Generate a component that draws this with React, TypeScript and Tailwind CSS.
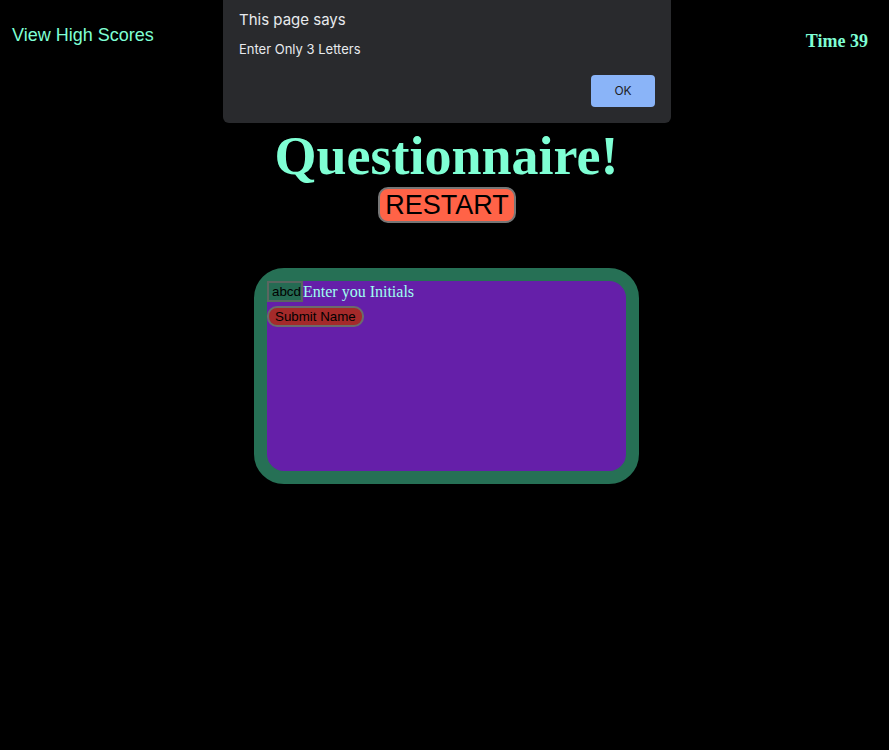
import React from "react";

export default function App() {
  return (
    <div className="relative min-h-[750px] w-full bg-black font-['Liberation_Serif',serif]">
      <div className="flex items-start justify-between px-3 pt-[24px]">
        <a className="font-['Liberation_Sans',Arial,sans-serif] text-[18px] leading-[22px] text-[#7fffd4]">
          View High Scores
        </a>
        <p className="mr-[9px] mt-[6px] text-[18px] font-bold leading-[22px] text-[#7fffd4]">Time 39</p>
      </div>

      <div className="flex flex-col items-center pt-[74px] pl-[4px]">
        <h1 className="text-[54px] font-bold leading-[60px] text-[#7fffd4]">Questionnaire!</h1>
        <button className="mt-[1px] ml-[1px] rounded-[10px] border-2 border-[#767676] bg-[#ff6347] px-[5px] py-[1px] font-['Liberation_Sans',Arial,sans-serif] text-[27px] leading-[30px] text-black">
          RESTART
        </button>
      </div>

      <div className="flex justify-center pl-[4px] pt-[45px]">
        <div className="h-[216px] w-[385px] rounded-[30px] border-[13px] border-[#267055] bg-[#651fa9]">
          <div className="flex items-center">
            <div className="h-[21px] w-[36px] overflow-hidden whitespace-nowrap border-2 border-[#5a6660] bg-[#256b53] pl-[3px] font-['Liberation_Sans',Arial,sans-serif] text-[13.33px] leading-[17px] text-black">
              abcd
            </div>
            <span className="text-[16px] leading-[20px] text-[#9ffff0]">Enter you Initials</span>
          </div>
          <button className="mt-[4px] rounded-[10px] border-2 border-[#6b6b6b] bg-[#a52a2a] px-[6px] font-['Liberation_Sans',Arial,sans-serif] text-[13.33px] leading-[17px] text-black">
            Submit Name
          </button>
        </div>
      </div>

      <div className="absolute left-[223px] top-0 h-[123px] w-[448px] rounded-b-[6px] bg-[#292a2d] px-4 font-['Inter','Liberation_Sans',sans-serif] text-[#e8eaed]">
        <p className="pt-[9px] text-[15px] leading-[22px]">This page says</p>
        <p className="pt-[9px] text-[13px] leading-[18px]">Enter Only 3 Letters</p>
        <div className="flex justify-end pt-[17px]">
          <button className="h-[32px] w-[64px] rounded-[4px] bg-[#8ab4f8] text-[12px] text-[#202124]">OK</button>
        </div>
      </div>
    </div>
  );
}
